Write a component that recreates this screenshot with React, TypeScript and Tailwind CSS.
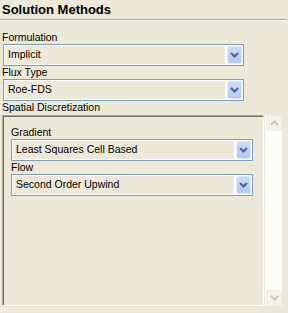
const font = { fontFamily: '"Liberation Sans", Arial, sans-serif' };

function Chevron({ color }: { color: string }) {
  return (
    <svg width="9" height="6" viewBox="0 0 9 6" className="block">
      <path d="M1 1 L4.5 4.5 L8 1" fill="none" stroke={color} strokeWidth="2" />
    </svg>
  );
}

function Dropdown({ value, width }: { value: string; width: string }) {
  return (
    <div className={`${width} h-[22px] border border-[#7f9db9] bg-white p-px flex`}>
      <div className="flex-1 bg-[#ece9d8] flex items-center pl-[3px] text-[10.5px] text-black">{value}</div>
      <div className="w-[15px] ml-[2px] rounded-[2px] border border-[#e2e9fb] bg-gradient-to-b from-[#cddcfc] to-[#b4c8f6] flex items-center justify-center">
        <Chevron color="#4d6185" />
      </div>
    </div>
  );
}

function Label({ children, className = '' }: { children: string; className?: string }) {
  return <div className={`h-[13px] leading-[13px] text-[10.5px] text-black ${className}`}>{children}</div>;
}

function ScrollButton({ up }: { up: boolean }) {
  return (
    <div className="h-[16px] w-[16px] rounded-[2px] border border-[#eeede5] bg-[#f3f1ec] flex items-center justify-center">
      <div className={up ? 'rotate-180' : ''}>
        <Chevron color="#c9c7ba" />
      </div>
    </div>
  );
}

export default function App() {
  return (
    <div className="w-[288px] h-[313px] bg-[#ece9d8] overflow-hidden" style={font}>
      {/* Header */}
      <div className="h-[19px] pl-[2px] pt-[2px] text-[13px] font-bold leading-[15px] text-black">Solution Methods</div>
      <div className="w-[287px] border-t border-[#aca899] border-b border-b-white" />

      <div className="pl-[3px]">
        <Label className="mt-[10px] -ml-[1px]">Formulation</Label>
        <Dropdown value="Implicit" width="w-[241px]" />
        <Label className="-ml-[1px]">Flux Type</Label>
        <Dropdown value="Roe-FDS" width="w-[241px]" />
      </div>
      <Label className="pl-[2px] h-[14px] leading-[12px]">Spatial Discretization</Label>

      {/* Scrollable panel */}
      <div className="flex h-[191px] pl-[2px]">
        <div className="w-[262px] border-t border-l border-[#aca899] border-r border-b border-r-white border-b-white">
          <div className="h-full border-t border-l border-[#716f64] pl-[7px] pt-[9px]">
            <Label>Gradient</Label>
            <Dropdown value="Least Squares Cell Based" width="w-[242px]" />
            <Label>Flow</Label>
            <Dropdown value="Second Order Upwind" width="w-[242px]" />
          </div>
        </div>
        <div className="ml-[1px] w-[17px] bg-[#fcfcf8] flex flex-col justify-between pl-px">
          <ScrollButton up />
          <ScrollButton up={false} />
        </div>
      </div>
    </div>
  );
}
